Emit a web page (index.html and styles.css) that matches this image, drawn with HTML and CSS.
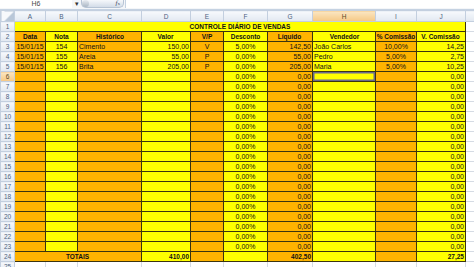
FILE: index.html
```html
<!DOCTYPE html>
<html lang="pt">
<head>
    <meta charset="UTF-8">
    <title>Controle diário de vendas</title>
    <link rel="stylesheet" href="styles.css">
</head>
<body>
    <div class="formula-bar">
        <div class="name-box">H6</div>
        <span class="name-arrow">&#9662;</span>
        <div class="fx-box"><span class="grip"></span><span class="fx"><i>f</i><small>x</small></span></div>
        <div class="formula-input"></div>
    </div>
    <table class="sheet">
        <colgroup>
            <col class="col-num">
            <col class="col-a orange">
            <col class="col-b yellow">
            <col class="col-c orange">
            <col class="col-d yellow">
            <col class="col-e orange">
            <col class="col-f yellow">
            <col class="col-g orange">
            <col class="col-h yellow">
            <col class="col-i orange">
            <col class="col-j yellow">
            <col class="col-k">
        </colgroup>
        <thead>
            <tr><th class="corner"></th><th>A</th><th>B</th><th>C</th><th>D</th><th>E</th><th>F</th><th>G</th><th class="selected">H</th><th>I</th><th>J</th><th></th></tr>
        </thead>
        <tbody>
            <tr><th>1</th><td colspan="10" class="title">CONTROLE DIÁRIO DE VENDAS</td><td class="blank"></td></tr>
            <tr class="head"><th>2</th><td>Data</td><td>Nota</td><td>Histórico</td><td>Valor</td><td>V/P</td><td>Desconto</td><td>Líquido</td><td>Vendedor</td><td>% Comissão</td><td>V. Comissão</td><td class="blank"></td></tr>
            <tr><th>3</th><td>15/01/15</td><td>154</td><td>Cimento</td><td>150,00</td><td>V</td><td>5,00%</td><td>142,50</td><td>João Carlos</td><td>10,00%</td><td>14,25</td><td class="blank"></td></tr>
            <tr><th>4</th><td>15/01/15</td><td>155</td><td>Areia</td><td>55,00</td><td>P</td><td>0,00%</td><td>55,00</td><td>Pedro</td><td>5,00%</td><td>2,75</td><td class="blank"></td></tr>
            <tr><th>5</th><td>15/01/15</td><td>156</td><td>Brita</td><td>205,00</td><td>P</td><td>0,00%</td><td>205,00</td><td>Maria</td><td>5,00%</td><td>10,25</td><td class="blank"></td></tr>
            <tr><th class="selected">6</th><td></td><td></td><td></td><td></td><td></td><td>0,00%</td><td>0,00</td><td class="active"></td><td></td><td>0,00</td><td class="blank"></td></tr>
            <tr><th>7</th><td></td><td></td><td></td><td></td><td></td><td>0,00%</td><td>0,00</td><td></td><td></td><td>0,00</td><td class="blank"></td></tr>
            <tr><th>8</th><td></td><td></td><td></td><td></td><td></td><td>0,00%</td><td>0,00</td><td></td><td></td><td>0,00</td><td class="blank"></td></tr>
            <tr><th>9</th><td></td><td></td><td></td><td></td><td></td><td>0,00%</td><td>0,00</td><td></td><td></td><td>0,00</td><td class="blank"></td></tr>
            <tr><th>10</th><td></td><td></td><td></td><td></td><td></td><td>0,00%</td><td>0,00</td><td></td><td></td><td>0,00</td><td class="blank"></td></tr>
            <tr><th>11</th><td></td><td></td><td></td><td></td><td></td><td>0,00%</td><td>0,00</td><td></td><td></td><td>0,00</td><td class="blank"></td></tr>
            <tr><th>12</th><td></td><td></td><td></td><td></td><td></td><td>0,00%</td><td>0,00</td><td></td><td></td><td>0,00</td><td class="blank"></td></tr>
            <tr><th>13</th><td></td><td></td><td></td><td></td><td></td><td>0,00%</td><td>0,00</td><td></td><td></td><td>0,00</td><td class="blank"></td></tr>
            <tr><th>14</th><td></td><td></td><td></td><td></td><td></td><td>0,00%</td><td>0,00</td><td></td><td></td><td>0,00</td><td class="blank"></td></tr>
            <tr><th>15</th><td></td><td></td><td></td><td></td><td></td><td>0,00%</td><td>0,00</td><td></td><td></td><td>0,00</td><td class="blank"></td></tr>
            <tr><th>16</th><td></td><td></td><td></td><td></td><td></td><td>0,00%</td><td>0,00</td><td></td><td></td><td>0,00</td><td class="blank"></td></tr>
            <tr><th>17</th><td></td><td></td><td></td><td></td><td></td><td>0,00%</td><td>0,00</td><td></td><td></td><td>0,00</td><td class="blank"></td></tr>
            <tr><th>18</th><td></td><td></td><td></td><td></td><td></td><td>0,00%</td><td>0,00</td><td></td><td></td><td>0,00</td><td class="blank"></td></tr>
            <tr><th>19</th><td></td><td></td><td></td><td></td><td></td><td>0,00%</td><td>0,00</td><td></td><td></td><td>0,00</td><td class="blank"></td></tr>
            <tr><th>20</th><td></td><td></td><td></td><td></td><td></td><td>0,00%</td><td>0,00</td><td></td><td></td><td>0,00</td><td class="blank"></td></tr>
            <tr><th>21</th><td></td><td></td><td></td><td></td><td></td><td>0,00%</td><td>0,00</td><td></td><td></td><td>0,00</td><td class="blank"></td></tr>
            <tr><th>22</th><td></td><td></td><td></td><td></td><td></td><td>0,00%</td><td>0,00</td><td></td><td></td><td>0,00</td><td class="blank"></td></tr>
            <tr><th>23</th><td></td><td></td><td></td><td></td><td></td><td>0,00%</td><td>0,00</td><td></td><td></td><td>0,00</td><td class="blank"></td></tr>
            <tr class="totals"><th>24</th><td colspan="3" class="total-label">TOTAIS</td><td>410,00</td><td></td><td></td><td>402,50</td><td></td><td></td><td>27,25</td><td class="blank"></td></tr>
            <tr class="empty"><th>25</th><td></td><td></td><td></td><td></td><td></td><td></td><td></td><td></td><td></td><td></td><td class="blank"></td></tr>
        </tbody>
    </table>
</body>
</html>
```

FILE: styles.css
```css
body {
    margin: 0;
    width: 474px;
    height: 267px;
    overflow: hidden;
    background-color: #ffffff;
    font-family: "Liberation Sans", Arial, sans-serif;
}

/* formula bar */

.formula-bar {
    display: flex;
    align-items: flex-start;
    height: 9px;
    border-bottom: 1px solid #c5d2e2;
    background-color: #f4f6f9;
    overflow: hidden;
}

.name-box {
    width: 72px;
    font-size: 7px;
    line-height: 7px;
    text-align: center;
    color: #4a4a4a;
    background-color: #ffffff;
    height: 8px;
}

.name-arrow {
    width: 9px;
    font-size: 7px;
    line-height: 7px;
    color: #333333;
    text-align: center;
}

.fx-box {
    display: flex;
    justify-content: space-between;
    align-items: center;
    width: 43px;
    height: 8px;
    border-radius: 0 0 5px 5px;
    background: linear-gradient(#f6f8fb, #d3dce8);
    border: 1px solid #b7c4d5;
    border-top: none;
    box-sizing: border-box;
}

.grip {
    width: 7px;
    height: 7px;
    border-radius: 50%;
    background: linear-gradient(#e8ecf1, #aab6c4);
}

.fx {
    font-family: "Liberation Serif", serif;
    font-size: 7px;
    line-height: 7px;
    color: #3c4a5c;
    padding-right: 3px;
}

.fx small {
    font-size: 5px;
}

.formula-input {
    flex: 1;
    height: 8px;
    margin-left: 1px;
    background-color: #ffffff;
    border-left: 1px solid #c5d2e2;
}

/* sheet grid */

.sheet {
    table-layout: fixed;
    border-collapse: collapse;
    width: 474px;
}

.col-num { width: 14px; }
.col-a { width: 31px; }
.col-b { width: 32px; }
.col-c { width: 64px; }
.col-d { width: 49px; }
.col-e { width: 33px; }
.col-f { width: 44px; }
.col-g { width: 45px; }
.col-h { width: 63px; }
.col-i { width: 41px; }
.col-j { width: 49px; }
.col-k { width: 9px; }

.orange {
    background-color: #ffb300;
}

.yellow {
    background-color: #ffff00;
}

.sheet th {
    padding: 0;
    font-weight: normal;
    font-size: 6.5px;
    color: #4f6382;
    background: linear-gradient(#f7f9fc, #e1e8f1);
    border: 1px solid #c3cfdf;
    text-align: center;
    overflow: hidden;
    white-space: nowrap;
}

.sheet thead tr {
    height: 11px;
}

.sheet tbody tr {
    height: 10px;
}

.sheet th.selected {
    background: linear-gradient(#fbe6c2, #f6c883);
    color: #5a4a2a;
}

.sheet th.corner {
    background: linear-gradient(135deg, #f7f9fc 55%, #b9c7d8 55%);
}

.sheet td {
    padding: 0;
    font-size: 7px;
    line-height: 8px;
    color: #111111;
    border: 1px solid #3b3410;
    white-space: nowrap;
    overflow: hidden;
}

.sheet td:nth-child(2),
.sheet td:nth-child(3),
.sheet td:nth-child(6),
.sheet td:nth-child(7),
.sheet td:nth-child(10) {
    text-align: center;
}

.sheet td:nth-child(4),
.sheet td:nth-child(9) {
    text-align: left;
    padding-left: 1px;
}

.sheet td:nth-child(5),
.sheet td:nth-child(8),
.sheet td:nth-child(11) {
    text-align: right;
    padding-right: 1px;
}

.sheet td.blank {
    background-color: #ffffff;
    border-color: #d5dbe4;
}

.sheet td.title {
    background-color: #ffff00;
    font-weight: bold;
    font-size: 6.5px;
    text-align: center;
}

.head td {
    font-weight: bold;
    font-size: 6.5px;
    text-align: center !important;
}

.sheet td.active {
    box-shadow: inset 0 0 0 1.5px #6c6c8e;
}

.totals td {
    font-weight: bold;
    font-size: 6.5px;
    text-align: right !important;
    padding-right: 1px;
}

.totals td.total-label {
    background-color: #ffb300;
    text-align: center !important;
}

.empty td {
    background-color: #ffffff;
    border-color: #d5dbe4;
}
```
